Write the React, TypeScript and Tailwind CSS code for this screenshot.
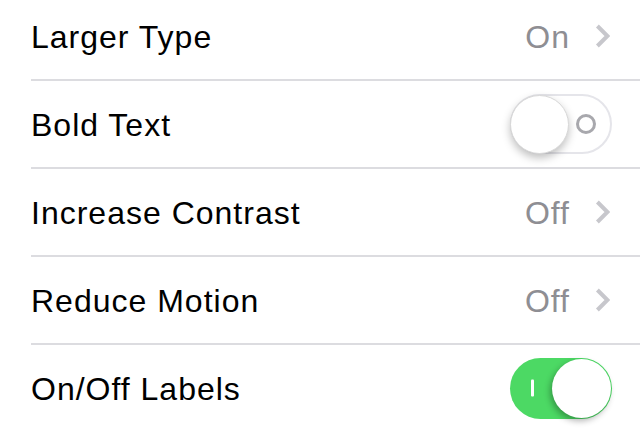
import React from "react";

function Chevron() {
  return (
    <svg width="15" height="24" viewBox="0 0 15 24" className="shrink-0">
      <path d="M2.4 2 L12.4 12 L2.4 22" fill="none" stroke="#c7c7cc" strokeWidth="4" strokeLinejoin="miter" />
    </svg>
  );
}

function ToggleOff() {
  return (
    <div className="relative w-[102px] h-[60px] rounded-full border-2 border-[#e5e5ea] bg-white">
      <div className="absolute right-[14px] top-1/2 -translate-y-1/2 w-[20px] h-[20px] rounded-full border-[3px] border-[#a8a8ad]" />
      <div className="absolute left-[-2px] top-[-1px] w-[59px] h-[59px] rounded-full bg-white border border-[#d8d8d8] shadow-[0_4px_8px_rgba(0,0,0,0.25)]" />
    </div>
  );
}

function ToggleOn() {
  return (
    <div className="relative w-[102px] h-[61px] rounded-full bg-[#4cd964]">
      <div className="absolute left-[21px] top-1/2 -translate-y-1/2 w-[3px] h-[17px] bg-white rounded-[1px]" />
      <div className="absolute right-[1px] top-[1px] w-[59px] h-[59px] rounded-full bg-white shadow-[-2px_3px_6px_rgba(0,0,0,0.3)]" />
    </div>
  );
}

type Row = { label: string; value?: string; toggle?: "on" | "off" };

const rows: Row[] = [
  { label: "Larger Type", value: "On" },
  { label: "Bold Text", toggle: "off" },
  { label: "Increase Contrast", value: "Off" },
  { label: "Reduce Motion", value: "Off" },
  { label: "On/Off Labels", toggle: "on" },
];

export default function App() {
  return (
    <div
      className="w-[640px] h-[428px] overflow-hidden bg-white"
      style={{ fontFamily: '"Liberation Sans", Arial, sans-serif' }}
    >
      <div className="mt-[-7px] pl-[31px]">
        {rows.map((r, i) => (
          <div key={r.label}>
            {i > 0 && <div className="h-[2px] bg-[#dcdce0]" />}
            <div className="h-[86px] flex items-center justify-between">
              <span className="text-[32px] tracking-[1px] text-black leading-none pt-[2px]">{r.label}</span>
              {r.value && (
                <div className="flex items-center pr-[30px]">
                  <span className="text-[32px] tracking-[1px] text-[#8e8e93] leading-none mr-[25px] pt-[2px]">{r.value}</span>
                  <Chevron />
                </div>
              )}
              {r.toggle === "off" && (
                <div className="pr-[28px]">
                  <ToggleOff />
                </div>
              )}
              {r.toggle === "on" && (
                <div className="pr-[28px]">
                  <ToggleOn />
                </div>
              )}
            </div>
          </div>
        ))}
      </div>
    </div>
  );
}
